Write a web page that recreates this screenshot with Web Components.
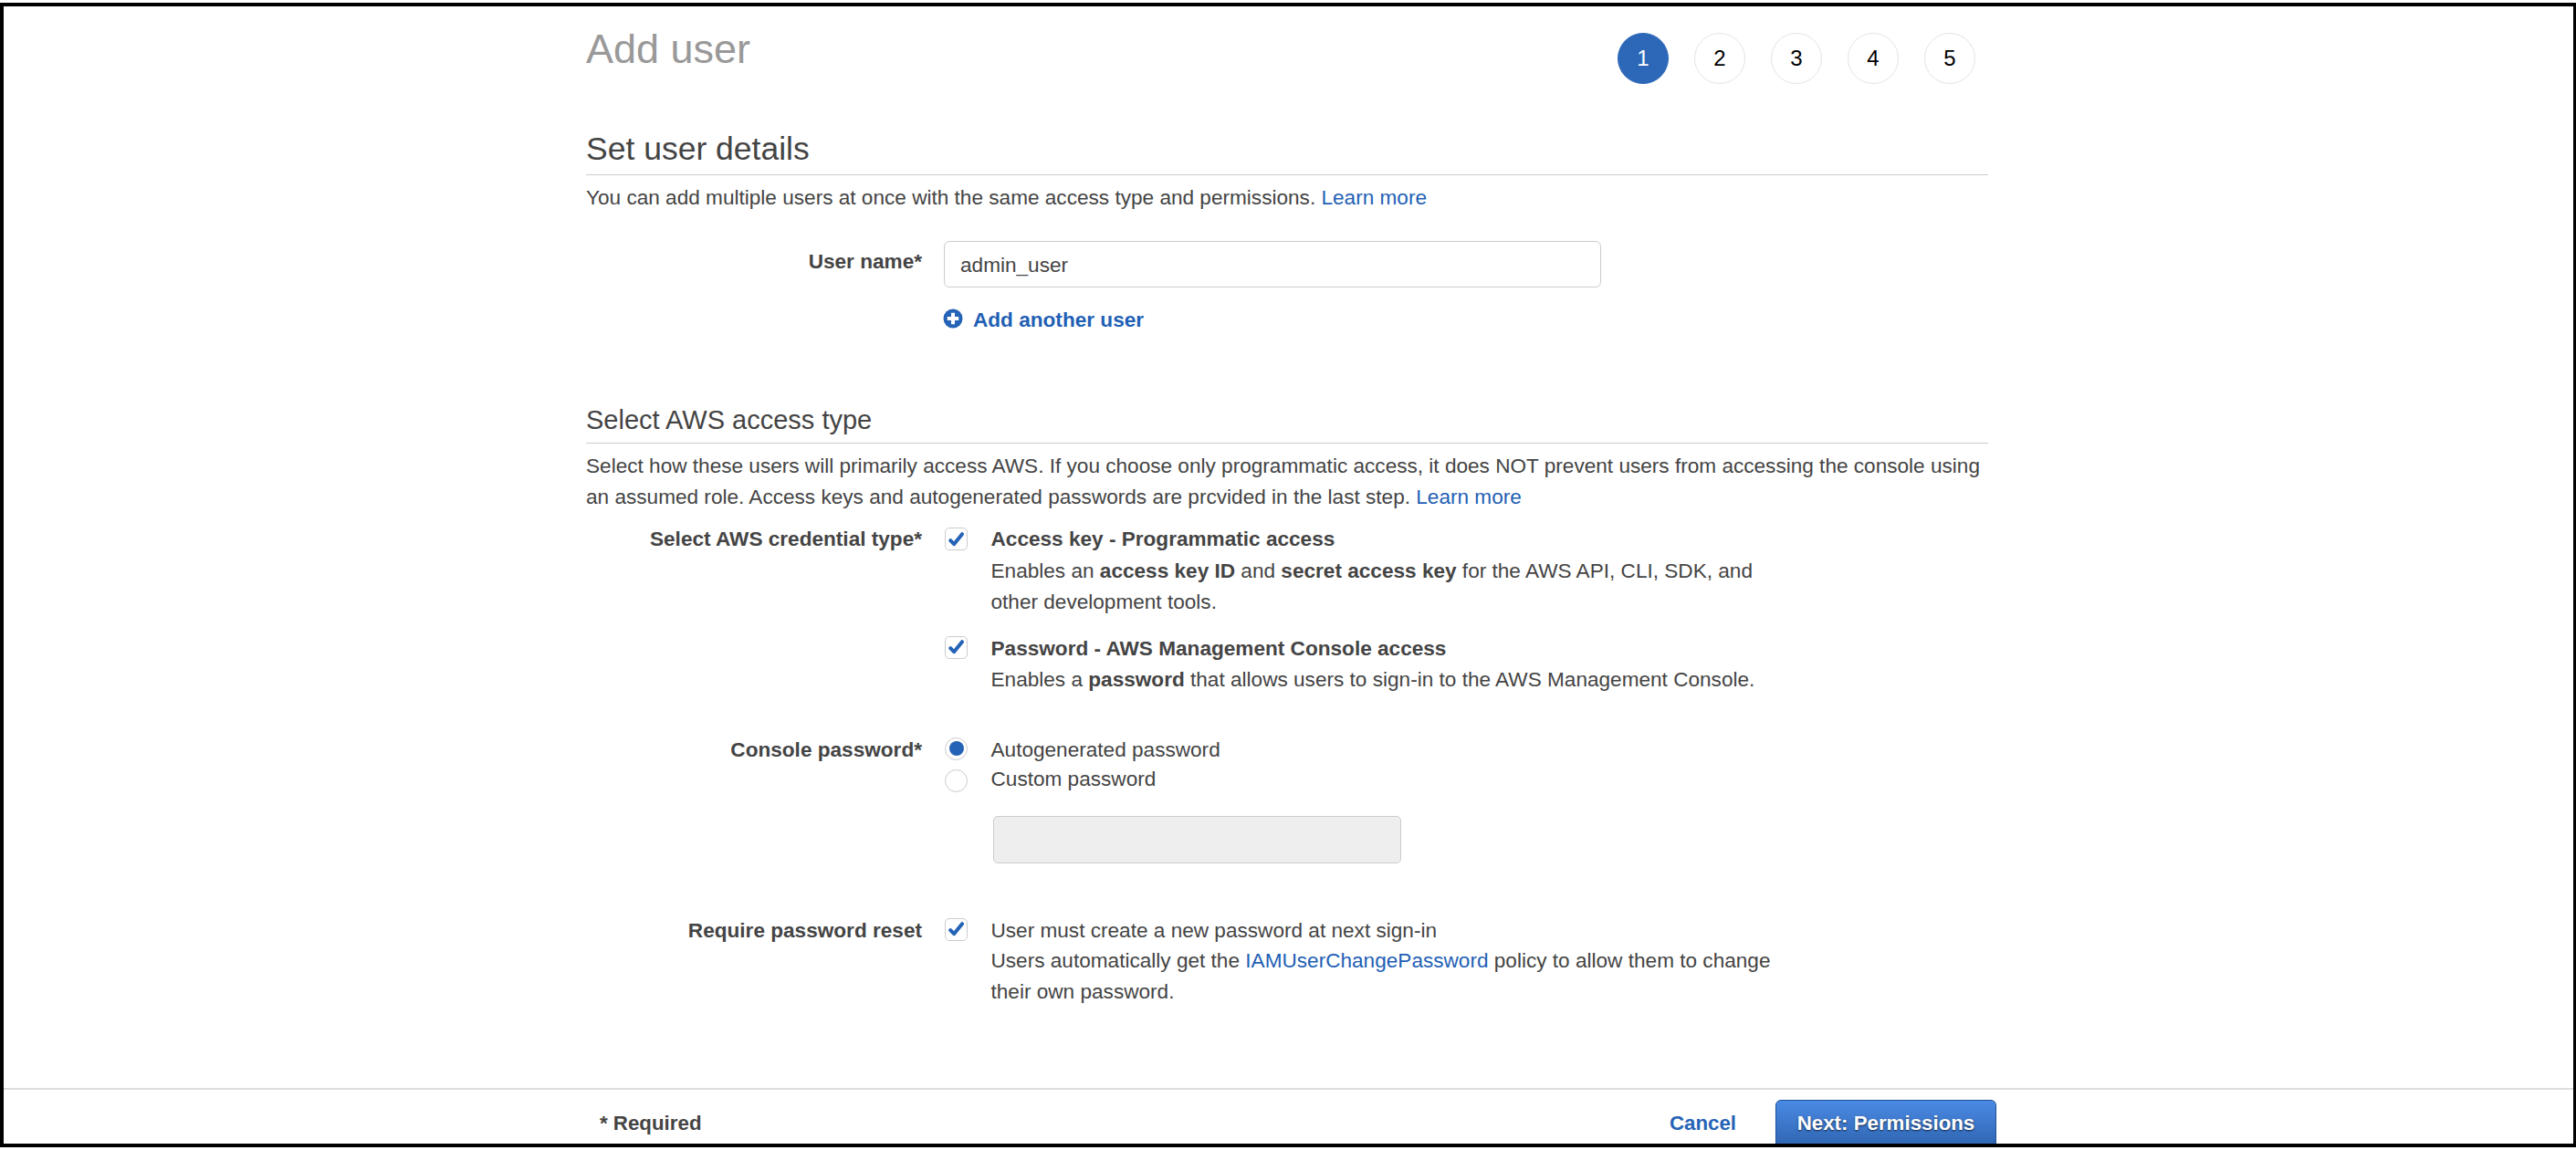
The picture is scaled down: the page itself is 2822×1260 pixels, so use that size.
<!DOCTYPE html>
<html lang="en">
<head>
<meta charset="utf-8">
<title>Add user</title>
<style>
  html, body { margin: 0; padding: 0; background: #fff; }
  body { font: 400 22.6px/34px "Liberation Sans", Arial, sans-serif; color: #444; }
</style>
</head>
<body>
<aws-frame>
  <aws-header title-text="Add user">
    <aws-step active>1</aws-step><aws-step>2</aws-step><aws-step>3</aws-step><aws-step>4</aws-step><aws-step>5</aws-step>
  </aws-header>

  <aws-section heading="Set user details" size="35.5" gap="50" lh="42" pad="7">
    You can add multiple users at once with the same access type and permissions. <aws-link>Learn more</aws-link>
  </aws-section>

  <aws-row label="User name*" style="margin-top:30px" label-top="6">
    <aws-input value="admin_user"></aws-input>
    <aws-add-link>Add another user</aws-add-link>
  </aws-row>

  <aws-section heading="Select AWS access type" size="29" gap="74" lh="36" pad="7">
    Select how these users will primarily access AWS. If you choose only programmatic access, it does NOT prevent users from accessing the console using<br>an assumed role. Access keys and autogenerated passwords are prcvided in the last step. <aws-link>Learn more</aws-link>
  </aws-section>

  <aws-row label="Select AWS credential type*" style="margin-top:12px">
    <aws-option type="check" checked mark-top="4">
      <b>Access key - Programmatic access</b><br>
      Enables an <b>access key ID</b> and <b>secret access key</b> for the AWS API, CLI, SDK, and<br>other development tools.
    </aws-option>
    <aws-option type="check" checked mark-top="3" style="margin-top:16px">
      <b>Password - AWS Management Console access</b><br>
      Enables a <b>password</b> that allows users to sign-in to the AWS Management Console.
    </aws-option>
  </aws-row>

  <aws-row label="Console password*" style="margin-top:42px">
    <aws-option type="radio" checked mark-top="3">Autogenerated password</aws-option>
    <aws-option type="radio" mark-top="6" style="margin-top:-2px">Custom password</aws-option>
    <aws-disabled-field></aws-disabled-field>
  </aws-row>

  <aws-row label="Require password reset" style="margin-top:57px">
    <aws-option type="check" checked mark-top="3" style="line-height:33.5px">
      User must create a new password at next sign-in<br>
      Users automatically get the <aws-link>IAMUserChangePassword</aws-link> policy to allow them to change<br>their own password.
    </aws-option>
  </aws-row>

  <aws-footer slot="footer"></aws-footer>
</aws-frame>

<script>
function shadow(el, html) {
  el.attachShadow({ mode: 'open' }).innerHTML = html;
  return el.shadowRoot;
}

customElements.define('aws-frame', class extends HTMLElement {
  constructor() {
    super();
    shadow(this, `<style>
      :host { display: block; box-sizing: border-box; width: 2822px; height: 1260px; padding: 3px 0; background: #fff; }
      .box { box-sizing: border-box; height: 100%; display: flex; flex-direction: column; overflow: hidden;
             border: solid #000; border-width: 4px 3px 4px 4px; background: #fff; }
      main { flex: 1 1 auto; min-height: 0; box-sizing: border-box; padding-left: 638px; width: 2174px; }
    </style>
    <div class="box"><main><slot></slot></main><slot name="footer"></slot></div>`);
  }
});

customElements.define('aws-header', class extends HTMLElement {
  constructor() {
    super();
    shadow(this, `<style>
      :host { display: flex; justify-content: space-between; align-items: flex-start; width: 1522px; }
      h1 { margin: 19px 0 0; font: 400 45px/56px "Liberation Sans", Arial, sans-serif; color: #999; }
      .steps { display: flex; gap: 28px; margin-top: 29px; }
    </style>
    <h1></h1><div class="steps"><slot></slot></div>`);
    this.shadowRoot.querySelector('h1').textContent = this.getAttribute('title-text');
  }
});

customElements.define('aws-step', class extends HTMLElement {
  constructor() {
    super();
    shadow(this, `<style>
      :host { box-sizing: border-box; display: flex; align-items: center; justify-content: center;
              width: 56px; height: 56px; border-radius: 50%; border: 1.5px solid #e4e4e4; background: #fff;
              color: #000; font: 400 24px/1 "Liberation Sans", Arial, sans-serif; }
      :host([active]) { background: #2d68b8; border-color: #2d68b8; color: #fff; }
    </style><slot></slot>`);
  }
});

customElements.define('aws-section', class extends HTMLElement {
  constructor() {
    super();
    const size = this.getAttribute('size'), gap = this.getAttribute('gap'),
          lh = this.getAttribute('lh'), pad = this.getAttribute('pad');
    shadow(this, `<style>
      :host { display: block; width: 1536px; margin-top: ${gap}px; }
      h2 { margin: 0 0 8px; padding-bottom: ${pad}px; border-bottom: 1.5px solid #ccc;
           font: 400 ${size}px/${lh}px "Liberation Sans", Arial, sans-serif; color: #444; }
      .body { white-space: nowrap; }
    </style><h2></h2><div class="body"><slot></slot></div>`);
    this.shadowRoot.querySelector('h2').textContent = this.getAttribute('heading');
  }
});

customElements.define('aws-link', class extends HTMLElement {
  constructor() {
    super();
    shadow(this, `<style>:host { display: inline; color: #1f5fb5; cursor: pointer; }</style><slot></slot>`);
  }
});

customElements.define('aws-row', class extends HTMLElement {
  constructor() {
    super();
    const top = this.getAttribute('label-top') || 0;
    shadow(this, `<style>
      :host { display: grid; grid-template-columns: 368px 1fr; column-gap: 24px; width: 1536px; align-items: start; }
      .label { text-align: right; font-weight: 700; padding-top: ${top}px; line-height: 34px; white-space: nowrap; }
      .ctl { min-width: 0; }
    </style><div class="label"></div><div class="ctl"><slot></slot></div>`);
    this.shadowRoot.querySelector('.label').textContent = this.getAttribute('label');
  }
});

customElements.define('aws-input', class extends HTMLElement {
  constructor() {
    super();
    shadow(this, `<style>
      :host { box-sizing: border-box; display: flex; align-items: center; width: 720px; height: 51px;
              padding: 3px 0 0 17px; border: 1.5px solid #ccc; border-radius: 6px; background: #fff; color: #444; }
    </style><span></span>`);
    this.shadowRoot.querySelector('span').textContent = this.getAttribute('value');
  }
});

customElements.define('aws-add-link', class extends HTMLElement {
  constructor() {
    super();
    shadow(this, `<style>
      :host { display: flex; align-items: center; gap: 11px; margin: 19px 0 0 -1px; color: #1f5fb5; font-weight: 700; line-height: 34px; }
      svg { width: 22px; height: 22px; flex: none; margin-top: -4px; }
    </style>
    <svg viewBox="0 0 22 22" aria-hidden="true">
      <circle cx="11" cy="11" r="10.5" fill="#2563b6"/>
      <path d="M9 4.8h4V9h4.2v4H13v4.2H9V13H4.8V9H9z" fill="#fff"/>
    </svg><slot></slot>`);
  }
});

customElements.define('aws-option', class extends HTMLElement {
  constructor() {
    super();
    const type = this.getAttribute('type');
    const checked = this.hasAttribute('checked');
    const top = this.getAttribute('mark-top') || 0;
    const mark = type === 'radio'
      ? (checked ? '<span class="dot"></span>' : '')
      : (checked ? '<svg viewBox="0 0 25 25" aria-hidden="true"><path d="M6.2 14.2l3.9 4 8.9-11" fill="none" stroke="#2563b6" stroke-width="4" stroke-linecap="round" stroke-linejoin="round"/></svg>' : '');
    shadow(this, `<style>
      :host { display: flex; align-items: flex-start; gap: 26px; margin-left: 1px; line-height: 34.5px; white-space: nowrap; }
      .mark { box-sizing: border-box; flex: none; width: 25px; height: 25px; margin-top: ${top}px;
              border: 1.5px solid #ccc; background: #fff; display: flex; align-items: center; justify-content: center;
              border-radius: ${type === 'radio' ? '50%' : '5px'}; position: relative; }
      .mark svg { position: absolute; left: -1.5px; top: -1.5px; width: 25px; height: 25px; }
      .dot { width: 16px; height: 16px; border-radius: 50%; background: #2563b6; }
      .txt { min-width: 0; margin-left: -0.5px; }
    </style><span class="mark">${mark}</span><div class="txt"><slot></slot></div>`);
  }
});

customElements.define('aws-disabled-field', class extends HTMLElement {
  constructor() {
    super();
    shadow(this, `<style>
      :host { box-sizing: border-box; display: block; width: 447px; height: 52px; margin: 22px 0 0 54px;
              background: #eee; border: 1.5px solid #ccc; border-radius: 5px; }
    </style>`);
  }
});

customElements.define('aws-footer', class extends HTMLElement {
  constructor() {
    super();
    shadow(this, `<style>
      :host { box-sizing: border-box; flex: none; display: flex; align-items: flex-start; height: 61px;
              padding: 11px 632px 0 653px; border-top: 2px solid #ddd; font-size: 22.3px; font-weight: 700; }
      .req { margin-top: 9px; line-height: 34px; margin-right: auto; color: #444; }
      .cancel { margin-top: 9px; line-height: 34px; color: #2563b6; margin-right: 43px; }
      .next { box-sizing: border-box; width: 242px; height: 60px; padding-top: 9px; line-height: 32px; text-align: center;
              color: #fff; border: 1px solid #1d4f98; border-radius: 6px;
              background: linear-gradient(#4a8ae4, #2b5fa9); text-shadow: 0 1px 2px rgba(0,0,0,.7); }
    </style>
    <span class="req">* Required</span><span class="cancel">Cancel</span><span class="next">Next: Permissions</span>`);
  }
});
</script>
</body>
</html>
